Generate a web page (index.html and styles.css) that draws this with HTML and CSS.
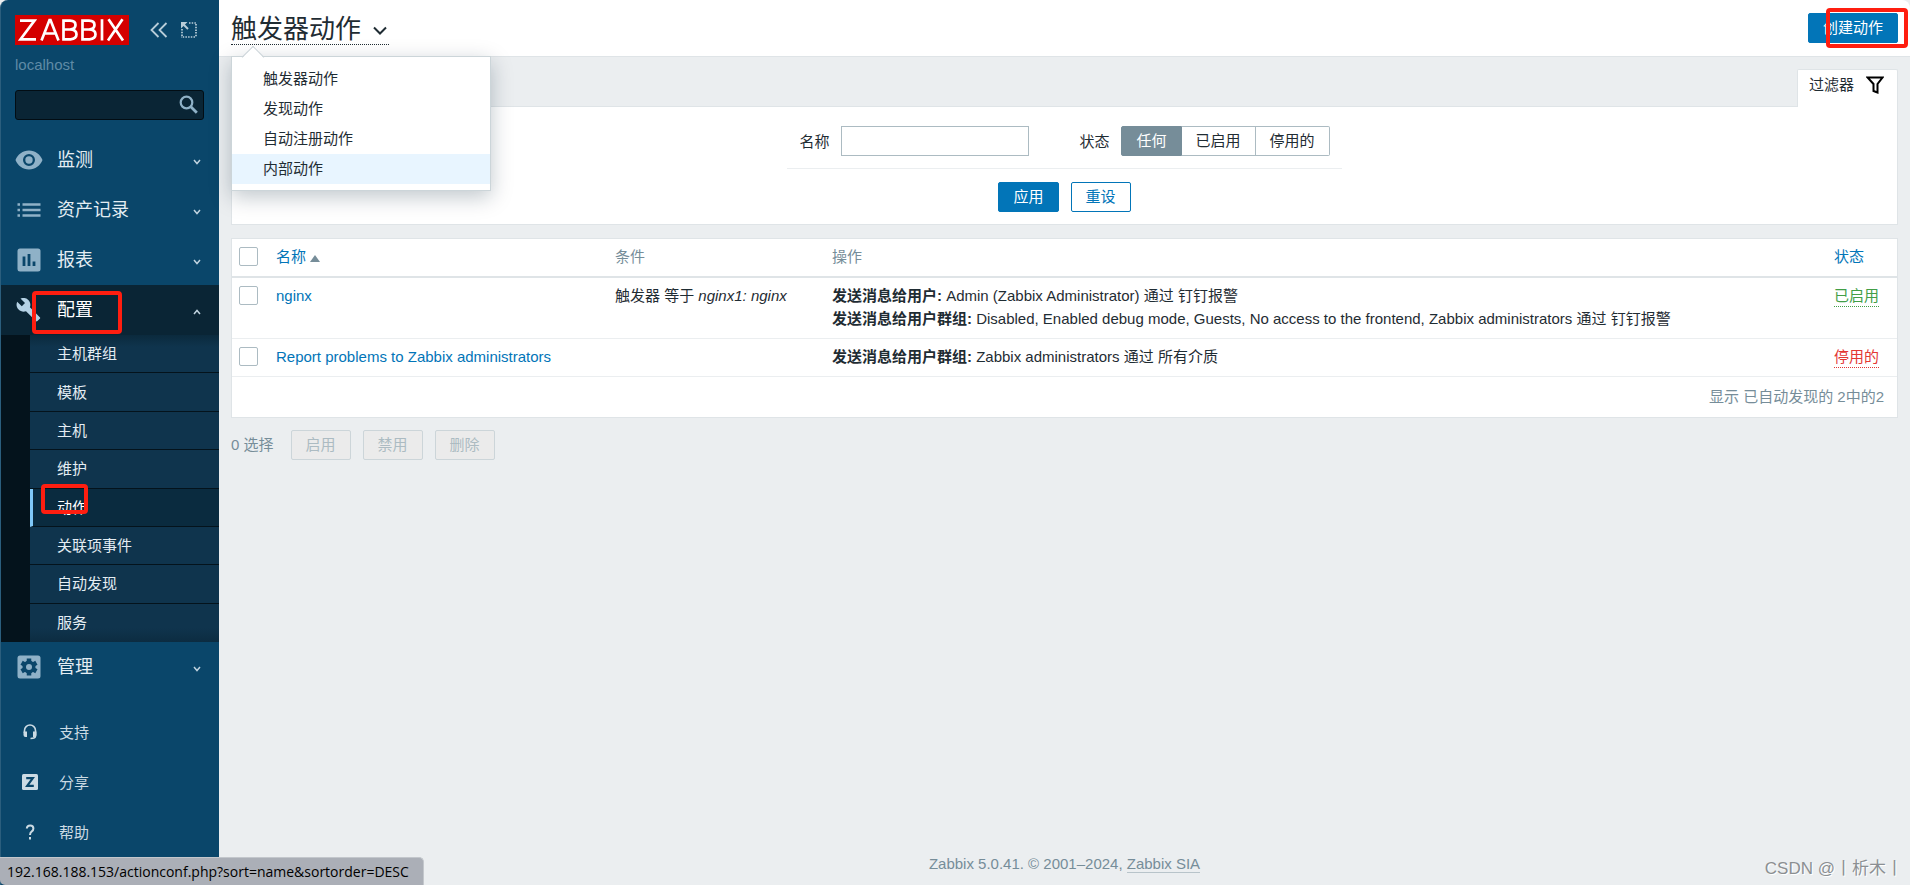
FILE: index.html
```html
<!DOCTYPE html>
<html lang="zh-CN">
<head>
<meta charset="utf-8">
<title>触发器动作</title>
<link rel="stylesheet" href="styles.css">
</head>
<body>
<div class="app">
  <aside class="sidebar">
    <div class="brand">
      <a class="logo" href="#" aria-label="Zabbix">
        <svg width="114" height="30" viewBox="0 0 114 30" fill="none" stroke="#fff" stroke-width="2.700"><path d="M5 5.600H19.500L5.500 24.300H21M26.500 25.500 34.500 5H35.500L43.500 25.500M29.500 18.500H40.500M48.500 14.500H55Q60.500 14.200 60.500 10T55 5.600H48.500V24.300H55.500Q61.500 24 61.500 19.300T55 14.500M67.500 14.500H74Q79.500 14.200 79.500 10T74 5.600H67.500V24.300H74.500Q80.500 24 80.500 19.300T74 14.500M87 4.300V25.500M93.500 4.300 108 25.500M107.500 4.300 93 25.500"/></svg>
      </a>
      <div class="brand-tools">
        <button class="tool" aria-label="折叠"><svg width="18" height="16" viewBox="0 0 18 16" fill="none" stroke="#b9cdd9" stroke-width="1.800"><path d="M8.500 1 1.500 8l7 7M16.500 1l-7 7 7 7"/></svg></button>
        <button class="tool" aria-label="隐藏"><svg width="16" height="16" viewBox="0 0 16 16" fill="none" stroke="#b9cdd9"><path stroke-width="1.700" stroke-dasharray="1.500 1.200" d="M8 1h7.200M15 2v13.200M14 15H0M1 14V7"/><path stroke-width="2" d="m2 2 5 5"/><path fill="#b9cdd9" stroke="none" d="M0 0h6.500L0 6.500z"/></svg></button>
      </div>
    </div>
    <div class="server">localhost</div>
    <form class="search">
      <input type="text" aria-label="搜索">
      <button type="button" class="search-btn" aria-label="搜索"><svg width="20" height="20" viewBox="0 0 20 20" fill="none" stroke="#8fb1c7"><circle cx="7.500" cy="7.500" r="5.800" stroke-width="2.200"/><path stroke-width="2.800" d="m11.800 11.800 6 6"/></svg></button>
    </form>
    <nav class="menu">
      <a class="menu-item" href="#"><svg class="icon" viewBox="0 0 28 24"><path fill="#8fb1c7" fill-rule="evenodd" d="M14 2.500C7.800 2.500 2.600 6.400.5 12c2.100 5.600 7.300 9.500 13.500 9.500S25.400 17.600 27.500 12C25.400 6.400 20.200 2.500 14 2.500zM14 18a6 6 0 1 1 0-12 6 6 0 0 1 0 12zm0-2.300a3.700 3.700 0 1 0 0-7.400 3.700 3.700 0 0 0 0 7.400z"/></svg><span>监测</span><svg class="chev" viewBox="0 0 8 6"><path d="m1 1 3 3.500L7 1"/></svg></a>
      <a class="menu-item" href="#"><svg class="icon" viewBox="0 0 28 24"><path fill="none" stroke="#8fb1c7" stroke-width="2.700" d="M2.500 6.500H5M2.500 12H5m-2.500 5.500H5M7.500 6.500h18M7.500 12h18m-18 5.500h18"/></svg><span>资产记录</span><svg class="chev" viewBox="0 0 8 6"><path d="m1 1 3 3.500L7 1"/></svg></a>
      <a class="menu-item" href="#"><svg class="icon" viewBox="0 0 28 24"><rect x="2.500" y=".5" width="23" height="23" rx="2.500" fill="#8fb1c7"/><path fill="none" stroke="#0a466a" stroke-width="2.800" d="M9 8.500V18M14 6v12m5-4.500V18"/></svg><span>报表</span><svg class="chev" viewBox="0 0 8 6"><path d="m1 1 3 3.500L7 1"/></svg></a>
      <a class="menu-item open" href="#"><svg class="icon" viewBox="0 0 28 24"><path fill="#b5d2e5" d="m24.800 19.200-9.900-9.900c1-2.500.4-5.400-1.600-7.400C11.100-.2 8-.6 5.500.6l4.500 4.500-3.200 3.200L2.200 3.800c-1.200 2.500-.8 5.600 1.400 7.800 2 2 4.900 2.600 7.400 1.600l9.900 9.900c.4.400 1.100.4 1.500 0l2.400-2.400c.5-.4.500-1.100 0-1.500z"/></svg><span>配置</span><svg class="chev" viewBox="0 0 8 6"><path d="m1 5 3-3.500L7 5"/></svg></a>
      <div class="submenu">
        <a href="#">主机群组</a>
        <a href="#">模板</a>
        <a href="#">主机</a>
        <a href="#">维护</a>
        <a class="current" href="#">动作</a>
        <a href="#">关联项事件</a>
        <a href="#">自动发现</a>
        <a href="#">服务</a>
      </div>
      <a class="menu-item" href="#"><svg class="icon" viewBox="0 0 28 24"><rect x="2.500" y=".5" width="23" height="23" rx="2.500" fill="#8fb1c7"/><g stroke="#0a466a" stroke-width="4.500"><path d="M14 3.500v17M6.600 7.800l14.800 8.400M6.600 16.200l14.800-8.400"/></g><circle cx="14" cy="12" r="6.500" fill="#0a466a"/><circle cx="14" cy="12" r="3" fill="#8fb1c7"/></svg><span>管理</span><svg class="chev" viewBox="0 0 8 6"><path d="m1 1 3 3.500L7 1"/></svg></a>
    </nav>
    <nav class="help">
      <a href="#"><svg viewBox="0 0 16 16"><path fill="none" stroke="#ccdbe4" stroke-width="1.600" d="M2.500 9V6.500a5.500 5.500 0 0 1 11 0V12q0 2.500-5 2.500"/><path fill="#ccdbe4" d="M1.500 7.500H5V13H3.500q-2 0-2-2zM14.500 7.500H11V13h1.500q2 0 2-2z"/></svg>支持</a>
      <a href="#"><svg viewBox="0 0 16 16"><rect width="16" height="16" rx="1.500" fill="#ccdbe4"/><path fill="none" stroke="#0a466a" stroke-width="2.200" d="M4.200 4.200h6.600L5.200 11.800h6.600"/></svg>分享</a>
      <a href="#"><svg viewBox="0 0 16 16"><path fill="none" stroke="#ccdbe4" stroke-width="2" d="M4.800 4.500Q5 1.500 8.200 1.500t3.200 3Q11.400 6.300 9.800 7.300T8 11M8 13v2.500"/></svg>帮助</a>
    </nav>
  </aside>

  <div class="page">
    <header class="header">
      <h1><button class="title">触发器动作<svg width="14" height="10" viewBox="0 0 14 10"><path fill="none" stroke="#1f2c33" stroke-width="2" d="m1 1.500 6 6 6-6"/></svg></button></h1>
      <button class="btn primary">创建动作</button>
      <div class="popup" role="menu">
        <a role="menuitem" href="#">触发器动作</a>
        <a role="menuitem" href="#">发现动作</a>
        <a role="menuitem" href="#">自动注册动作</a>
        <a role="menuitem" class="hover" href="#">内部动作</a>
      </div>
    </header>

    <main class="content">
      <div class="tabs"><a class="tab" href="#">过滤器<svg width="18" height="18" viewBox="0 0 18 18"><path fill="none" stroke="#000" stroke-width="2" d="M1.500 1.500h15L11.500 8v8.500l-4-1.500V8z"/></svg></a></div>
      <form class="filter">
        <div class="filter-fields">
          <label for="name">名称</label>
          <input id="name" class="text" type="text">
          <fieldset>
            <legend>状态</legend>
            <input type="radio" name="status" id="s0" checked><label for="s0">任何</label>
            <input type="radio" name="status" id="s1"><label for="s1">已启用</label>
            <input type="radio" name="status" id="s2"><label for="s2">停用的</label>
          </fieldset>
        </div>
        <div class="filter-buttons">
          <button type="button" class="btn primary">应用</button>
          <button type="button" class="btn">重设</button>
        </div>
      </form>

      <div class="panel">
        <table>
          <thead>
            <tr><th class="c-check"><input type="checkbox" aria-label="全选"></th><th class="c-name"><a href="#">名称<span class="sort"></span></a></th><th class="c-cond">条件</th><th>操作</th><th class="c-status"><a href="#">状态</a></th></tr>
          </thead>
          <tbody>
            <tr><td><input type="checkbox" aria-label="nginx"></td><td><a href="#">nginx</a></td><td>触发器 等于 <em>nginx1: nginx</em></td><td><b>发送消息给用户:</b> Admin (Zabbix Administrator) 通过 钉钉报警<br><b>发送消息给用户群组:</b> Disabled, Enabled debug mode, Guests, No access to the frontend, Zabbix administrators 通过 钉钉报警</td><td><a class="state on" href="#">已启用</a></td></tr>
            <tr><td><input type="checkbox" aria-label="Report problems to Zabbix administrators"></td><td><a href="#">Report problems to Zabbix administrators</a></td><td></td><td><b>发送消息给用户群组:</b> Zabbix administrators 通过 所有介质</td><td><a class="state off" href="#">停用的</a></td></tr>
          </tbody>
        </table>
        <div class="paging">显示 已自动发现的 2中的2</div>
      </div>

      <div class="actions">
        <span>0 选择</span>
        <button class="btn" disabled>启用</button>
        <button class="btn" disabled>禁用</button>
        <button class="btn" disabled>删除</button>
      </div>
    </main>
    <footer class="footer">Zabbix 5.0.41. © 2001–2024, <a href="#">Zabbix SIA</a></footer>
  </div>

  <div class="mark mark-config"></div>
  <div class="mark mark-action"></div>
  <div class="mark mark-create"></div>
  <div class="watermark">CSDN @丨析木丨</div>
  <div class="statusbar">192.168.188.153/actionconf.php?sort=name&amp;sortorder=DESC</div>
</div>
</body>
</html>
```
FILE: styles.css
```css
* { box-sizing: border-box; }
body {
  margin: 0;
  font: 15px/23px "Liberation Sans", "Noto Sans CJK SC", sans-serif;
  color: #1f2c33;
  background: #ebeef0;
}
a { color: #0275b8; text-decoration: none; }
button, input { font: inherit; }
button { cursor: pointer; }

.app { position: relative; display: flex; min-height: 100vh; overflow: hidden; }

/* Sidebar */
.sidebar {
  flex: none;
  width: 219px;
  display: flex;
  flex-direction: column;
  background: #0a466a;
  border-left: 1px solid #2b5e7d;
  border-top-left-radius: 8px;
}
.brand { display: flex; align-items: center; padding: 15px 22px 0 14px; justify-content: space-between; }
.logo { display: block; width: 114px; height: 30px; background: #d40000; }
.brand-tools { display: flex; gap: 13px; }
.tool { display: block; padding: 0; border: 0; background: none; }
.tool svg, .logo svg { display: block; }
.server { padding: 8px 14px 0; color: #5f8ba6; }
.search { position: relative; margin: 14px 15px 15px 14px; }
.search input {
  display: block;
  width: 100%;
  height: 30px;
  padding: 0 32px 0 8px;
  color: #fff;
  background: #0a2535;
  border: 1px solid #020d14;
  border-radius: 3px;
}
.search-btn { position: absolute; right: 5px; top: 5px; padding: 0; border: 0; background: none; line-height: 0; }
.menu-item {
  display: flex;
  align-items: center;
  height: 50px;
  padding: 0 18px 0 14px;
  font-size: 18px;
  color: #e4edf3;
}
.menu-item span { flex: 1; margin-left: 14px; }
.icon { width: 28px; height: 24px; }
.chev { width: 8px; height: 6px; margin-top: 3px; fill: none; stroke: #c0d3df; stroke-width: 1.500; }
.menu-item.open { background: #0a2535; color: #fff; }
.submenu {
  display: grid;
  grid-auto-rows: 1fr;
  min-height: 307px;
  padding-left: 29px;
  background: #04131c;
}
.submenu a {
  display: flex;
  align-items: center;
  padding-left: 27px;
  color: #e4edf3;
  background: #0f344d;
  border-bottom: 1px solid #04131c;
}
.submenu a:first-child { background: linear-gradient(#0b2a3d, #0f344d 12px); }
.submenu a:last-child { background: linear-gradient(#0f344d 24px, #0c2c41); border-bottom: 0; }
.submenu .current { background: #0a2b3f; border-left: 3px solid #80c8f7; padding-left: 24px; color: #fff; }
.help { margin-top: 15px; }
.help a { display: flex; align-items: center; gap: 21px; height: 50px; padding-left: 21px; color: #ccdbe4; }
.help svg { width: 16px; height: 16px; }

/* Header */
.page { flex: 1; min-width: 0; display: flex; flex-direction: column; }
.header {
  position: relative;
  display: flex;
  align-items: center;
  justify-content: space-between;
  height: 57px;
  padding: 0 12px;
  background: #fff;
  border-bottom: 1px solid #dfe4e7;
  border-top-right-radius: 8px;
}
h1 { margin: 0; font-weight: 400; line-height: 30px; }
.title {
  display: flex;
  align-items: center;
  gap: 12px;
  padding: 2px 2px 0 0;
  font-size: 26px;
  line-height: 30px;
  color: #1f2c33;
  background: none;
  border: 0;
  border-bottom: 1px dotted #1f2c33;
}
.title svg { margin-top: 5px; }
.btn {
  height: 30px;
  padding: 0 14px;
  line-height: 26px;
  color: #0275b8;
  background: #fff;
  border: 1px solid #0275b8;
  border-radius: 2px;
}
.btn.primary { color: #fff; background: #0275b8; }
.btn:disabled { color: #acbbc2; background: #ebebeb; border-color: #ccd5d9; }
.popup {
  position: absolute;
  z-index: 2;
  left: 12px;
  top: 56px;
  width: 260px;
  padding: 7px 0 6px;
  background: #fff;
  border: 1px solid #ccd5d9;
  box-shadow: 0 6px 20px rgba(0, 30, 50, .25);
}
.popup::before {
  content: "";
  position: absolute;
  left: 13px;
  top: -8px;
  width: 15px;
  height: 15px;
  background: linear-gradient(135deg, #fff 50%, transparent 50%);
  border: solid #ccd5d9;
  border-width: 1px 0 0 1px;
  transform: rotate(45deg);
}
.popup a { display: block; padding: 0 31px; line-height: 30px; color: #1f2c33; }
.popup .hover { background: #e8f5ff; }

/* Filter */
.content { padding: 12px 12px 0; }
.tabs { display: flex; justify-content: flex-end; }
.tab {
  position: relative;
  display: flex;
  align-items: center;
  gap: 12px;
  height: 38px;
  margin-bottom: -1px;
  padding: 0 13px 8px 11px;
  color: #1f2c33;
  background: #fff;
  border: 1px solid #dfe4e7;
  border-bottom: 0;
  border-radius: 2px 2px 0 0;
}
.filter {
  display: flex;
  flex-direction: column;
  align-items: center;
  padding: 19px 0 12px;
  background: #fff;
  border: 1px solid #dfe4e7;
}
.filter-fields {
  display: flex;
  align-items: center;
  padding: 0 12px 12px;
  border-bottom: 1px solid #ebeef0;
}
.text { width: 188px; height: 30px; margin: 0 50px 0 12px; border: 1px solid #acbbc2; background: #fff; }
fieldset { display: flex; align-items: center; margin: 0; padding: 0; border: 0; }
legend { float: left; padding: 0; margin-right: 12px; }
fieldset input { position: absolute; opacity: 0; }
fieldset label {
  height: 30px;
  padding: 0 14px;
  line-height: 28px;
  border: 1px solid #acbbc2;
  border-left-width: 0;
}
fieldset input:checked + label { color: #fff; background: #768d99; border-color: #768d99; border-left-width: 1px; border-radius: 2px 0 0 2px; }
fieldset label:last-child { border-radius: 0 2px 2px 0; }
.filter-buttons { display: flex; gap: 12px; margin-top: 13px; }

/* Table */
.panel { margin-top: 13px; background: #fff; border: 1px solid #dfe4e7; }
table { width: 100%; border-collapse: collapse; table-layout: fixed; }
th, td { padding: 6px; text-align: left; vertical-align: top; font-weight: 400; }
th { height: 38px; color: #768d99; border-bottom: 2px solid #dfe4e7; }
td { border-bottom: 1px solid #ebeef0; }
tbody tr { height: 38px; }
tbody tr:first-child { height: 61px; }
.c-check { width: 38px; }
.c-name { width: 339px; }
.c-cond { width: 217px; }
.c-status { width: 69px; }
.sort { display: inline-block; margin-left: 4px; border: solid transparent; border-width: 0 5px 7px; border-bottom-color: #768d99; }
input[type="checkbox"] {
  appearance: none;
  display: block;
  width: 19px;
  height: 19px;
  margin: 2px 0 0 1px;
  background: #fff;
  border: 1px solid #acbbc2;
  border-radius: 2px;
}
.state { display: inline-block; line-height: 20px; border-bottom: 1px dotted; }
.on { color: #429e47; }
.off { color: #e33734; }
.paging { padding: 8px 13px 9px; text-align: right; color: #768d99; }

.actions { display: flex; align-items: center; gap: 12px; margin-top: 12px; color: #768d99; }
.actions span { margin-right: 5px; }
.footer { margin-top: auto; padding-bottom: 10px; text-align: center; color: #768d99; }
.footer a { color: inherit; border-bottom: 1px solid #b8c4ca; }

/* Overlays */
.mark { position: absolute; z-index: 3; border: 4px solid #ff1e10; border-radius: 4px; pointer-events: none; }
.mark-config { left: 32px; top: 291px; width: 90px; height: 43px; }
.mark-action { left: 41px; top: 484px; width: 47px; height: 30px; }
.mark-create { right: 2px; top: 8px; width: 82px; height: 40px; }
.watermark { position: absolute; right: 7px; bottom: 5px; font-size: 17px; color: #8b8f92; text-shadow: 1px 1px 0 #fff; }
.statusbar {
  position: absolute;
  z-index: 4;
  left: 0;
  bottom: 0;
  height: 28px;
  padding: 0 14px 0 7px;
  font: 14px/27px "Open Sans", "Noto Sans", sans-serif;
  color: #000;
  background: #abafb7;
  border-top: 1px solid #c3c7cc;
  border-right: 1px solid #c3c7cc;
  border-radius: 0 5px 0 5px;
}
```
